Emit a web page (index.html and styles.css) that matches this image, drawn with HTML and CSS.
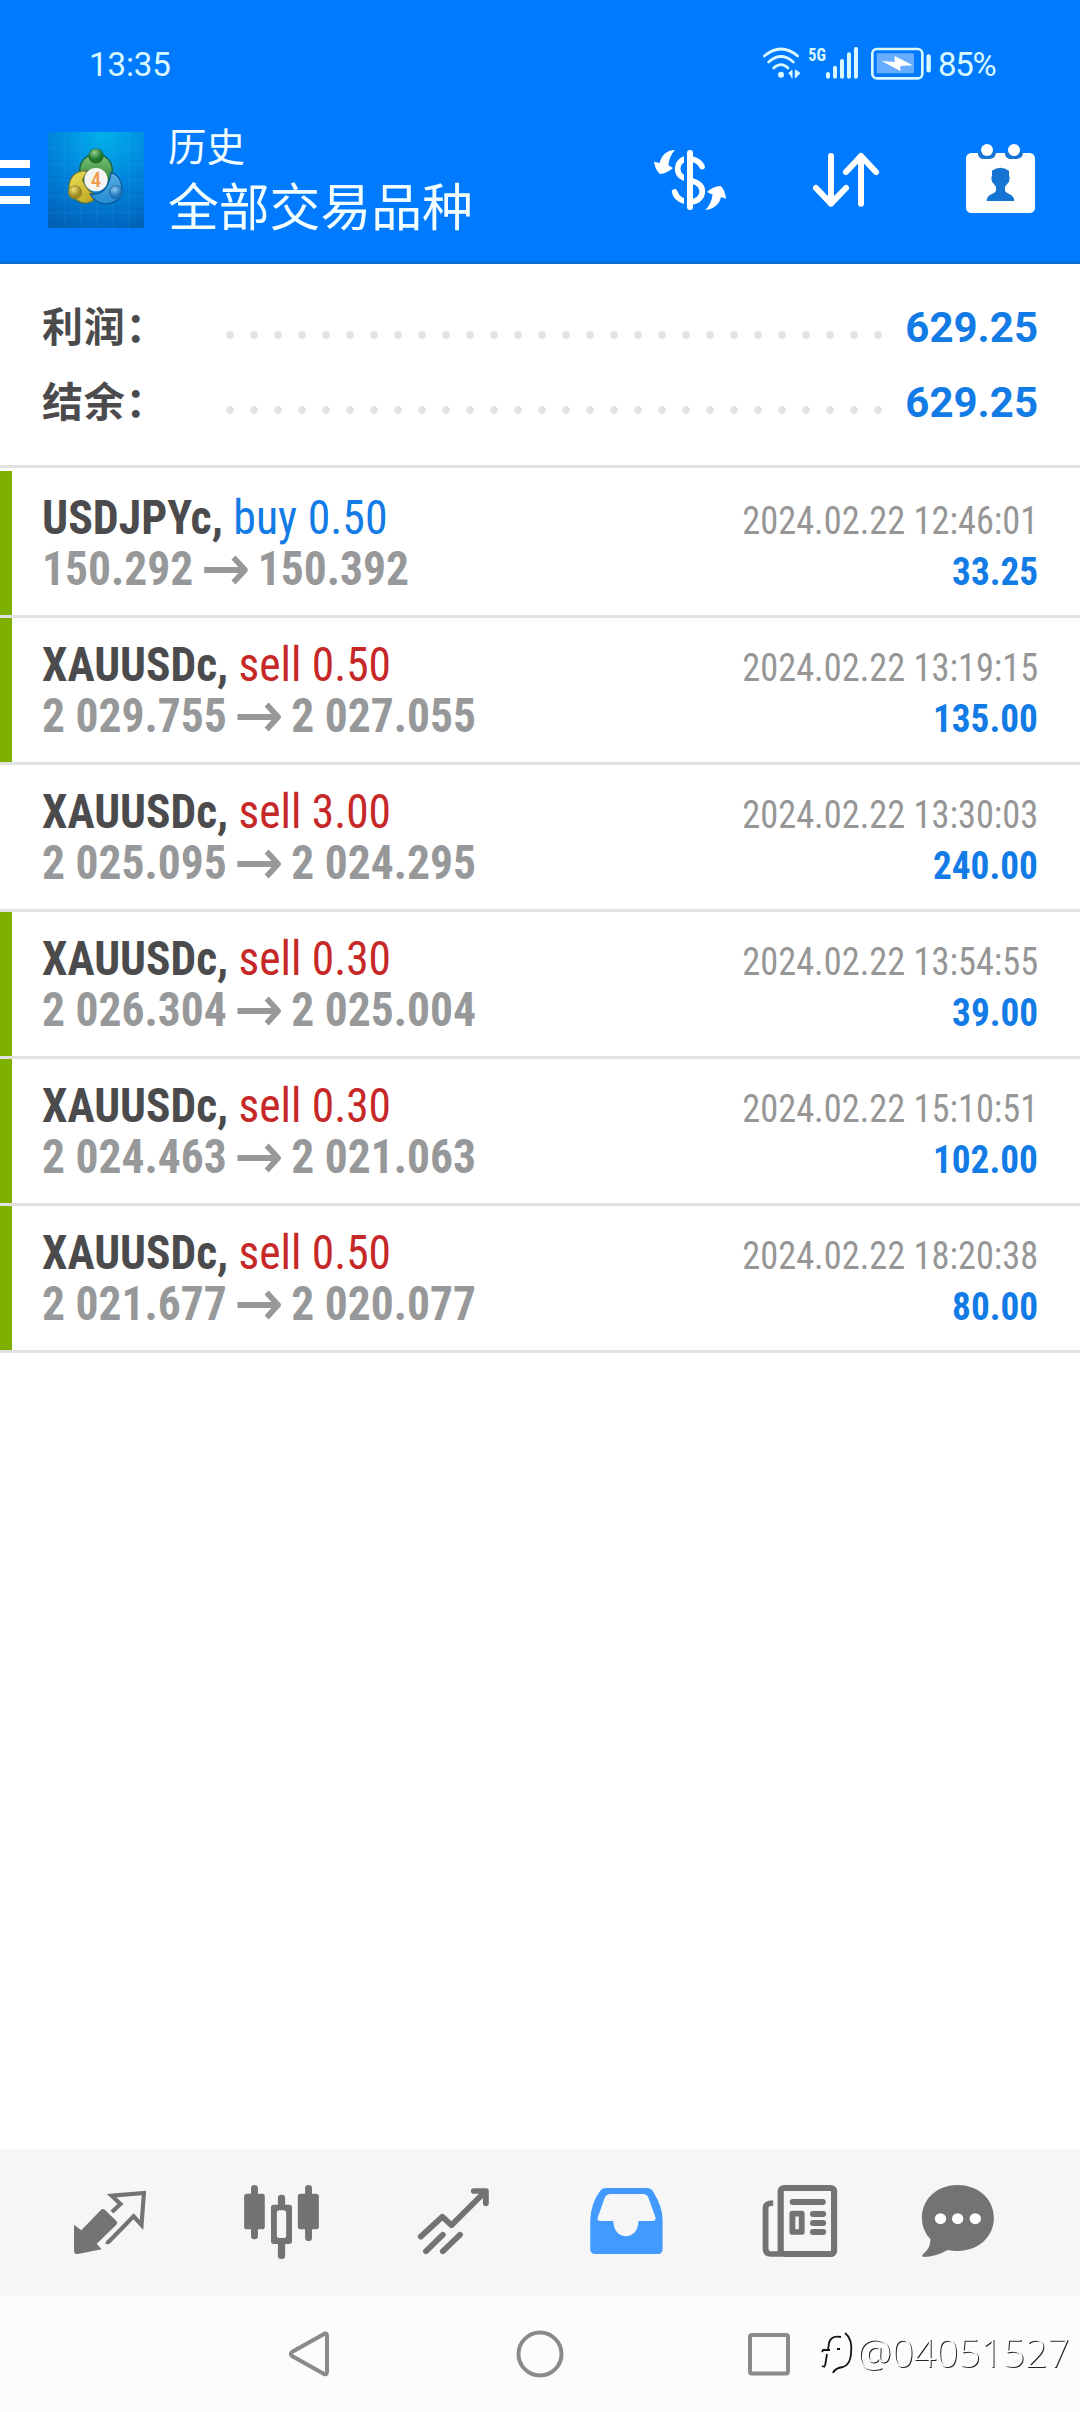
FILE: index.html
```html
<!DOCTYPE html>
<html lang="zh-CN">
<head>
<meta charset="utf-8">
<title>历史</title>
<link rel="stylesheet" href="styles.css">
</head>
<body>
<header class="header">
  <div class="status">
    <span class="clock">13:35</span>
    <svg class="status-icons" viewBox="480 72 522 120" fill="none" stroke="#d9f8ff" stroke-linecap="round">
      <path d="M493 108Q543 66 593 108M506 126Q543 93 580 126M521 144Q543 124 564 144" stroke-width="8"/>
      <circle cx="543" cy="164" r="9" fill="#d9f8ff" stroke="none"/>
      <path d="M566 160L576 151V174M586 151V174L599 160Z" fill="#d9f8ff" stroke-width="3"/>
      <text class="net" x="625" y="124" textLength="53" lengthAdjust="spacingAndGlyphs">5G</text>
      <path d="M684 162V170M705 143V170M726 123V170M747 103V170M768 87V170" stroke-width="12"/>
      <rect x="817" y="87" width="150" height="88" rx="14" stroke-width="8"/>
      <rect x="830" y="100" width="112" height="60" rx="4" fill="#66adff" stroke="none"/>
      <path d="M845 123L884 126V108L938 136L901 138V153Z" fill="#fff" stroke="none"/>
      <path d="M986 109V151" stroke-width="13"/>
    </svg>
    <span class="battery">85%</span>
  </div>
  <div class="bar">
    <div class="menu"><i></i><i></i><i></i></div>
    <svg class="logo" viewBox="24 21 288 288">
      <defs>
        <radialGradient id="bg" cx=".58" cy="0" r="1.1"><stop offset="0" stop-color="#00b2ec"/><stop offset=".5" stop-color="#0085dc"/><stop offset="1" stop-color="#005fb6"/></radialGradient>
        <linearGradient id="gr" x2="0" y2="1"><stop stop-color="#7cc576"/><stop offset="1" stop-color="#237a32"/></linearGradient>
        <linearGradient id="ye" x2="1" y2="1"><stop stop-color="#f2e45a"/><stop offset="1" stop-color="#b39b19"/></linearGradient>
        <linearGradient id="bl" x2="0" y2="1"><stop stop-color="#58aee4"/><stop offset="1" stop-color="#238cd2"/></linearGradient>
        <radialGradient id="gb" cx=".4" cy=".25"><stop stop-color="#8ed08c"/><stop offset="1" stop-color="#20762f"/></radialGradient>
        <radialGradient id="yb" cx=".4" cy=".3"><stop stop-color="#eee27b"/><stop offset="1" stop-color="#9b891c"/></radialGradient>
        <radialGradient id="bb" cx=".4" cy=".3"><stop stop-color="#8bcaf0"/><stop offset="1" stop-color="#1e73bc"/></radialGradient>
      </defs>
      <path d="M24 21H312V309H24Z" fill="url(#bg)"/>
      <path d="M24 71H312M24 119H312M24 167H312M24 215H312M24 263H312M73 21V309M121 21V309M170 21V309M218 21V309M266 21V309" stroke="#58bdf0" stroke-opacity=".2" stroke-width="2"/>
      <circle cx="168" cy="136" r="49" fill="url(#gr)" stroke="#176341" stroke-width="4"/>
      <path d="M88 205C82 165 98 136 142 137L128 165C139 192 151 205 173 210C160 238 128 240 110 225Z" fill="url(#ye)" stroke="#5d7542" stroke-width="4"/>
      <path d="M151 207C180 211 205 196 213 143C244 151 252 187 241 216C216 247 168 242 151 207Z" fill="url(#bl)" stroke="#0b599d" stroke-width="4"/>
      <circle cx="168" cy="93" r="22" fill="url(#gb)" stroke="#1f6630" stroke-width="2"/>
      <circle cx="105" cy="202" r="20" fill="url(#yb)" stroke="#827b2b" stroke-width="2"/>
      <circle cx="228" cy="202" r="20" fill="url(#bb)" stroke="#17659f" stroke-width="2"/>
      <circle cx="168" cy="164" r="35" fill="#f6f4f1"/>
      <text class="logo-num" x="168" y="187" text-anchor="middle">4</text>
    </svg>
    <div class="titles"><div class="title">历史</div><div class="subtitle">全部交易品种</div></div>
    <svg class="act dollar" viewBox="150 372 240 216" fill="none" stroke="#fff" stroke-linecap="round">
      <path d="M306 440C296 411 233 402 233 448C233 489 307 472 307 514C307 556 236 557 224 516" stroke-width="17"/>
      <path d="M257 385V575" stroke="#007bff" stroke-width="10" stroke-linecap="butt"/>
      <path d="M270 399V561" stroke-width="18"/>
      <path d="M225 390C199 391 185 406 179 429L162 425C164 440 170 453 180 462C194 461 209 454 219 444L205 436C207 418 213 402 225 390ZM316 570C341 568 358 554 363 531L378 536C376 519 371 506 362 498C346 499 331 506 321 516L338 524C334 544 328 558 316 570Z" fill="#fff" stroke="none"/>
    </svg>
    <svg class="act sort" viewBox="630 372 216 216" fill="none" stroke="#fff" stroke-width="18" stroke-linecap="round" stroke-linejoin="round">
      <path d="M693 408V551M648 504L693 551L738 504M783 551V408M738 456L783 408L828 456"/>
    </svg>
    <svg class="act cal" viewBox="1092 366 219 219">
      <rect x="1098" y="399" width="207" height="180" rx="16" fill="#fff"/>
      <path d="M1134 396V402Q1136 417 1152 417H1170Q1187 415 1188 399V396ZM1215 396V402Q1217 417 1233 417H1251Q1268 415 1269 399V396Z" fill="#1675d2"/>
      <circle cx="1161" cy="390" r="18" fill="#fff"/><circle cx="1242" cy="390" r="18" fill="#fff"/>
      <path d="M1176 452Q1201 435 1227 452V465Q1231 474 1227 485L1215 500V512C1220 523 1243 521 1243 543H1160C1160 521 1184 523 1188 512V500L1176 485Q1172 474 1176 465Z" fill="#1675d2"/>
    </svg>
  </div>
</header>
<section class="summary">
  <div class="sum"><span class="label">利润：</span><span class="dots"></span><b>629.25</b></div>
  <div class="sum"><span class="label">结余：</span><span class="dots"></span><b>629.25</b></div>
</section>
<svg width="0" height="0" class="defs"><symbol id="arrow" viewBox="0 0 46 30" preserveAspectRatio="none"><path d="M0 15H43M31 2.5L43 15L31 27.5" fill="none" stroke="currentColor" stroke-width="6"/></symbol></svg>
<main class="list">
  <article class="deal won"><div class="line"><span class="what"><b>USDJPYc,</b> <span class="buy">buy 0.50</span></span><time>2024.02.22 12:46:01</time></div><div class="line second"><span class="price">150.292 <svg class="arrow"><use href="#arrow"/></svg> 150.392</span><span class="profit">33.25</span></div></article>
  <article class="deal won"><div class="line"><span class="what gold"><b>XAUUSDc,</b> <span class="sell">sell 0.50</span></span><time>2024.02.22 13:19:15</time></div><div class="line second"><span class="price">2 029.755 <svg class="arrow"><use href="#arrow"/></svg> 2 027.055</span><span class="profit">135.00</span></div></article>
  <article class="deal"><div class="line"><span class="what gold"><b>XAUUSDc,</b> <span class="sell">sell 3.00</span></span><time>2024.02.22 13:30:03</time></div><div class="line second"><span class="price">2 025.095 <svg class="arrow"><use href="#arrow"/></svg> 2 024.295</span><span class="profit">240.00</span></div></article>
  <article class="deal won"><div class="line"><span class="what gold"><b>XAUUSDc,</b> <span class="sell">sell 0.30</span></span><time>2024.02.22 13:54:55</time></div><div class="line second"><span class="price">2 026.304 <svg class="arrow"><use href="#arrow"/></svg> 2 025.004</span><span class="profit">39.00</span></div></article>
  <article class="deal won"><div class="line"><span class="what gold"><b>XAUUSDc,</b> <span class="sell">sell 0.30</span></span><time>2024.02.22 15:10:51</time></div><div class="line second"><span class="price">2 024.463 <svg class="arrow"><use href="#arrow"/></svg> 2 021.063</span><span class="profit">102.00</span></div></article>
  <article class="deal won"><div class="line"><span class="what gold"><b>XAUUSDc,</b> <span class="sell">sell 0.50</span></span><time>2024.02.22 18:20:38</time></div><div class="line second"><span class="price">2 021.677 <svg class="arrow"><use href="#arrow"/></svg> 2 020.077</span><span class="profit">80.00</span></div></article>
</main>
<nav class="tabs">
  <svg viewBox="203.3 123 232.3 240" preserveAspectRatio="none" fill="none" stroke="#737373">
    <path d="M215 254L236 271L293 210Q299 204 305 210L338 243Q343 248 338 254L281 311L295 328L226 342Q215 343 215 332Z" fill="#737373" stroke="none"/>
    <path d="M325 216L350 192L324 167L418 159L411 255L388 229L317 304Q314 308 308 305" stroke-width="12"/>
  </svg>
  <svg viewBox="702.8 123 232.3 240" preserveAspectRatio="none" fill="#737373">
    <rect x="709" y="161" width="60" height="107" rx="8"/><rect x="729" y="135" width="20" height="163" rx="10"/>
    <rect x="865" y="161" width="61" height="107" rx="8"/><rect x="886" y="135" width="20" height="168" rx="10"/>
    <rect x="807" y="164" width="21" height="40" rx="10"/><rect x="807" y="300" width="21" height="57" rx="9"/>
    <path fill-rule="evenodd" d="M795 194H840Q848 194 848 202V304Q848 312 840 312H795Q787 312 787 304V202Q787 194 795 194ZM811 211Q804 211 804 219V287Q804 294 811 294H823Q831 294 831 287V219Q831 211 823 211Z"/>
  </svg>
  <svg viewBox="1202.3 123 232.3 240" preserveAspectRatio="none" fill="none" stroke="#737373" stroke-width="17" stroke-linecap="round" stroke-linejoin="round">
    <path d="M1222 290L1285 230L1311 256L1408 156M1376 153H1411V190M1237 334L1286 284M1286 334L1336 284"/>
  </svg>
  <svg viewBox="133.6 123 232.3 240" preserveAspectRatio="none" fill="#429aff">
    <path fill-rule="evenodd" d="M192 144H310Q322 144 328 154Q356 200 356 240V328Q356 342 342 342H160Q146 342 146 328V240Q148 190 174 154Q180 144 192 144ZM205 162Q193 162 188 173L168 232Q165 243 175 243H213C213 304 286 304 286 243H328Q338 241 335 231L315 173Q310 162 300 162Z"/>
  </svg>
  <svg class="news" viewBox="638.9 123 232.3 240" preserveAspectRatio="none" fill="none" stroke="#737373">
    <rect x="699" y="144" width="155" height="198" rx="10" stroke-width="18"/>
    <path d="M677 189Q655 189 655 204V325Q655 342 670 342H700" stroke-width="17"/>
    <path d="M734 186H821M793 222H822M793 249H822M793 276H822" stroke-width="18" stroke-linecap="round"/>
    <rect x="733" y="221" width="27" height="55" stroke-width="17" stroke-linejoin="round"/>
  </svg>
  <svg class="chat" viewBox="1097.7 123 232.3 240" preserveAspectRatio="none" fill="#737373">
    <path d="M1213 135C1272 135 1318 176 1318 234C1318 291 1272 333 1213 333Q1198 333 1184 330Q1148 351 1115 351Q1107 350 1112 343Q1134 325 1134 298Q1109 271 1109 234C1109 176 1154 135 1213 135Z"/>
    <g fill="#fff"><circle cx="1163" cy="236" r="16.5"/><circle cx="1213" cy="236" r="16.5"/><circle cx="1264" cy="236" r="16.5"/></g>
  </svg>
</nav>
<footer class="sysnav">
  <svg class="back" viewBox="0 0 44 50"><path d="M38 4.5Q40 4 40 7V43Q40 46 37 45L5 27Q2.500 25 5 23Z"/></svg>
  <svg class="home" viewBox="0 0 50 50"><circle cx="25" cy="25" r="21.500"/></svg>
  <svg class="recent" viewBox="0 0 44 44"><rect x="3" y="3" width="38" height="38.500" rx="2"/></svg>
  <div class="mark">
    <svg viewBox="0 0 36 44" fill="none" stroke="#111" stroke-width="1.800"><path d="M20 6Q10 4 8 12L7 19M1 21L2 19H9M6 23L4 35M1 35L4 36M24 2Q32 8 30 23Q29 34 22 36Q14 37 12 42M16 18H19"/></svg>
    <span>@04051527</span>
  </div>
</footer>
</body>
</html>
```
FILE: styles.css
```css
* { box-sizing: border-box; }
body { margin: 0; width: 1080px; height: 2412px; display: flex; flex-direction: column; overflow: hidden; background: #fff; font-family: Roboto, "Noto Sans CJK SC", sans-serif; }
svg { display: block; flex: none; }
.defs { position: absolute; }
.header { height: 264px; background: #007bff; border-bottom: 3px solid #0c6dd8; color: #f2fdff; }
.status { height: 120px; padding: 44px 0 0 89px; display: flex; color: #d9f8ff; }
.clock { width: 671px; font-size: 33px; line-height: 42px; letter-spacing: -.1px; }
.status-icons { width: 174px; height: 40px; }
.net { font: 700 57px Roboto, sans-serif; font-stretch: 75%; fill: #d9f8ff; stroke: none; }
.battery { font-size: 33px; line-height: 42px; margin-left: 4px; letter-spacing: -1.300px; }
.bar { height: 141px; display: flex; align-items: flex-start; }
.menu { width: 30px; margin-top: 40px; display: flex; flex-direction: column; gap: 10px; }
.menu i { height: 8px; background: #fff; }
.logo { width: 96px; height: 96px; margin: 12px 0 0 18px; }
.logo-num { font: 500 62px Roboto, sans-serif; font-stretch: 75%; fill: #f19a4a; }
.titles { width: 481px; padding: 2px 0 0 24px; }
.title { font-size: 38.500px; line-height: 52px; }
.subtitle { font-size: 50.800px; line-height: 70px; }
.act { height: 72px; margin-top: 24px; }
.dollar { width: 80px; margin-left: 25px; }
.sort { width: 72px; margin-left: 80px; }
.cal { width: 73px; height: 73px; margin: 22px 0 0 82px; }
.summary { height: 204px; padding: 24px 42px 0 42px; border-bottom: 3px solid #e1e1e1; }
.sum { height: 75px; display: flex; align-items: center; line-height: 75px; color: #4b4b4d; }
.label { width: 176px; font: 700 41px "Noto Sans CJK SC", sans-serif; line-height: 75px; padding-bottom: 3px; letter-spacing: .7px; }
.dots { width: 672px; height: 24px; margin-top: 19px; background: radial-gradient(circle, #e2e2e2 3.500px, transparent 4.300px) 0 0 / 24px 24px; }
.sum b { margin-left: auto; font-size: 42px; padding-top: 3px; color: #127be6; }
.list { padding-top: 3px; }
.deal { height: 147px; padding: 21px 42px 0 30px; border-left: 12px solid transparent; background: #fff; position: relative; }
.deal::after { content: ""; position: absolute; left: -12px; right: 0; bottom: 0; height: 3px; background: #e1e1e1; }
.won { border-left-color: #7fb000; }
.line { height: 51px; display: flex; justify-content: space-between; align-items: baseline; line-height: 51px; font-family: "Roboto Condensed", Roboto, sans-serif; font-stretch: 75%; white-space: nowrap; }
.what, .price { font-size: 48px; transform-origin: left; }
.what { color: #4b4b4d; transform: scaleX(.954); }
.gold { transform: scaleX(.946); }
.buy { color: #127be6; }
.sell { color: #c62828; }
time, .profit { font-size: 39px; transform-origin: right; }
time { color: #969696; transform: scaleX(.933); }
.price { color: #979899; font-weight: 700; transform: scaleX(.948); }
.profit { font-weight: 700; color: #127be6; transform: scaleX(.955); }
.arrow { display: inline-block; width: 46px; height: 30px; }
.tabs { height: 147px; margin-top: auto; padding: 32px 0 0 70px; display: flex; gap: 92px; background: #f6f6f6; }
.tabs svg { width: 80px; height: 80px; }
.tabs .news { margin-left: 2px; }
.tabs .chat { margin-left: -14px; }
.sysnav { height: 116px; display: flex; align-items: flex-start; padding-left: 287px; background: #fcfcfc; }
.sysnav > svg { fill: none; stroke: #8a8a8a; stroke-width: 4; }
.back { width: 44px; height: 50px; margin-top: 33px; }
.home { width: 50px; height: 50px; margin: 33px 0 0 184px; }
.recent { width: 44px; height: 44px; margin: 36px 0 0 182px; }
.mark { display: flex; margin: 35px 0 0 30px; opacity: .99; will-change: opacity; }
.mark svg { width: 36px; height: 44px; }
.mark span { font: 300 39px "Open Sans", "Noto Sans", sans-serif; line-height: 42px; color: #fff; text-shadow: 1px 1px 0 #222; }
```
